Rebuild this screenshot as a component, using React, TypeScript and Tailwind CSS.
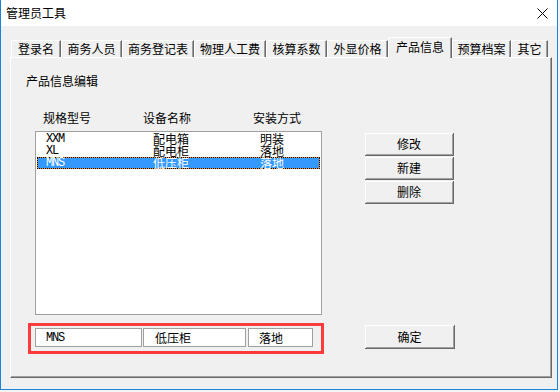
import React from "react";

const cjk = { fontFamily: '"Noto Sans CJK SC", "Noto Sans", sans-serif' };
const mono = { fontFamily: '"Liberation Mono", "Noto Sans CJK SC", monospace' };

const tabs: { label: string; w: number; active?: boolean }[] = [
  { label: "登录名", w: 50 },
  { label: "商务人员", w: 61 },
  { label: "商务登记表", w: 72 },
  { label: "物理人工费", w: 72 },
  { label: "核算系数", w: 61 },
  { label: "外显价格", w: 61 },
  { label: "产品信息", w: 64, active: true },
  { label: "预算档案", w: 59 },
  { label: "其它", w: 37 },
];

const rows = [
  { a: "XXM", b: "配电箱", c: "明装" },
  { a: "XL", b: "配电柜", c: "落地" },
  { a: "MNS", b: "低压柜", c: "落地", sel: true },
];

function Btn({ label, w = 89, h = 23 }: { label: string; w?: number; h?: number }) {
  return (
    <div
      className="flex items-center justify-center bg-[#f0f0f0] border-r border-b border-[#696969] shadow-[inset_1px_1px_0_#ffffff,inset_-1px_-1px_0_#a0a0a0] text-[12px] leading-[16px] text-black"
      style={{ ...cjk, width: w, height: h }}
    >
      {label}
    </div>
  );
}

export default function App() {
  return (
    <div className="w-[560px] h-[392px] bg-[#f4f4f4] overflow-hidden">
      <div className="w-[558px] h-[390px] flex flex-col border-l border-r border-b border-[#1883d7] bg-white">
        {/* Title bar */}
        <div className="h-[26px] flex items-center justify-between pl-[5px] pr-[9px] bg-white">
          <span className="text-[12px] leading-[16px] text-black" style={cjk}>
            管理员工具
          </span>
          <svg width="11" height="11" viewBox="0 0 11 11" className="mt-[1px]">
            <path d="M0.5 0.5 L10.5 10.5 M10.5 0.5 L0.5 10.5" stroke="#000" strokeWidth="1" />
          </svg>
        </div>
        {/* Client */}
        <div className="flex-1 bg-[#f0f0f0] pl-[9px] pt-[11px]">
          {/* Tab strip */}
          <div className="flex items-end h-[20px] pl-[1px] relative z-10">
            {tabs.map((t) =>
              t.active ? (
                <div
                  key={t.label}
                  className="h-[21px] -mb-px flex justify-center pt-[1px] bg-[#f0f0f0] border-t border-l border-white border-r border-r-[#696969] shadow-[inset_-1px_0_0_#a0a0a0] text-[12px] leading-[16px] text-black"
                  style={{ ...cjk, width: t.w }}
                >
                  {t.label}
                </div>
              ) : (
                <div
                  key={t.label}
                  className="h-[17px] flex items-center justify-center bg-[#f0f0f0] border-t border-l border-white border-r border-r-[#696969] shadow-[inset_-1px_0_0_#a0a0a0] text-[12px] leading-[16px] text-black"
                  style={{ ...cjk, width: t.w }}
                >
                  {t.label}
                </div>
              )
            )}
          </div>
          {/* Panel */}
          <div className="w-[542px] h-[321px] border-t border-l border-white border-r border-b border-r-[#696969] border-b-[#696969] shadow-[inset_-1px_-1px_0_#a0a0a0] flex flex-col">
            <div className="ml-[15px] mt-[15px] text-[12px] leading-[16px] text-black" style={cjk}>
              产品信息编辑
            </div>
            <div className="ml-[32px] mt-[21px] flex text-[12px] leading-[16px] text-black" style={cjk}>
              <div className="w-[100px]">规格型号</div>
              <div className="w-[110px]">设备名称</div>
              <div>安装方式</div>
            </div>
            <div className="flex mt-[5px]">
              {/* Listbox */}
              <div className="ml-[24px] w-[287px] h-[184px] bg-white border border-[#a0a0a0] pt-[1px] px-[1px]">
                {rows.map((r) => (
                  <div
                    key={r.a}
                    className={
                      r.sel
                        ? "h-[12px] border border-dotted border-black bg-[#e8902a]"
                        : "h-[12px] border border-transparent"
                    }
                  >
                    <div
                      className={
                        "h-full flex items-center text-[12px] leading-[12px] " +
                        (r.sel ? "bg-[#3399ff] text-white" : "text-black")
                      }
                    >
                      <div className="w-[115px] pl-[8px] tracking-[-1.2px]" style={mono}>
                        {r.a}
                      </div>
                      <div className="w-[107px]" style={cjk}>
                        {r.b}
                      </div>
                      <div style={cjk}>{r.c}</div>
                    </div>
                  </div>
                ))}
              </div>
              {/* Side buttons */}
              <div className="ml-[43px] mt-[2px] flex flex-col gap-[1px]">
                <Btn label="修改" />
                <Btn label="新建" />
                <Btn label="删除" />
              </div>
            </div>
            {/* Bottom row */}
            <div className="flex mt-[8px]">
              <div className="ml-[17px] w-[296px] h-[31px] border-[3px] border-[#fd3b3b] pl-[4px] pt-[2px] flex">
                <div className="w-[107px] h-[19px] bg-white border border-[#a0a0a0] pl-[10px] flex items-center text-[12px] leading-[12px] text-black tracking-[-1.2px]" style={mono}>
                  MNS
                </div>
                <div className="ml-[1px] w-[103px] h-[19px] bg-white border border-[#a0a0a0] pl-[11px] flex items-center text-[12px] leading-[16px] text-black" style={cjk}>
                  低压柜
                </div>
                <div className="ml-[2px] w-[65px] h-[19px] bg-white border border-[#a0a0a0] pl-[10px] flex items-center text-[12px] leading-[16px] text-black" style={cjk}>
                  落地
                </div>
              </div>
              <div className="ml-[41px] mt-[2px]">
                <Btn label="确定" w={90} h={24} />
              </div>
            </div>
          </div>
        </div>
      </div>
    </div>
  );
}
